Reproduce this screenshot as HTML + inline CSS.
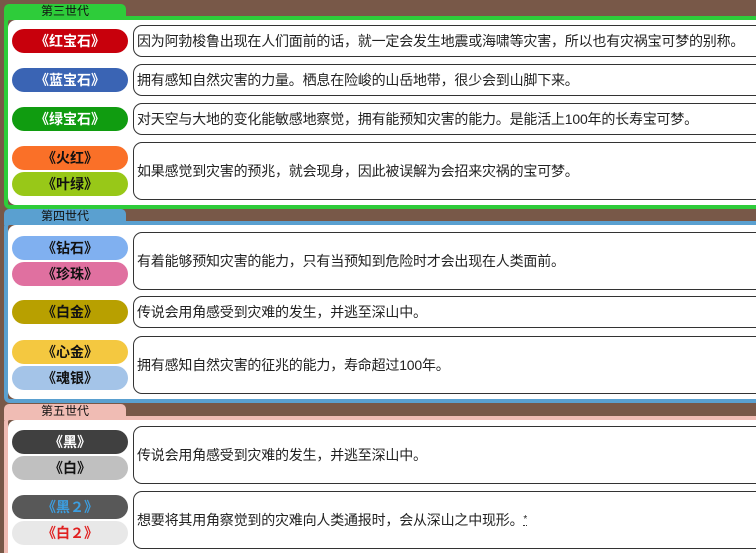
<!DOCTYPE html>
<html style="width:756px;height:553px;overflow:hidden"><head><meta charset="utf-8"><style>
*{margin:0;padding:0;box-sizing:border-box}
body{width:756px;height:553px;background:#785848;position:relative;overflow:hidden;font-family:"Liberation Sans","Noto Sans CJK SC",sans-serif}
.tab{position:absolute;left:4px;width:122px;height:16px;border-radius:5px 5px 0 0;font-size:12px;text-align:center;line-height:15px;color:#111}
.pan{position:absolute;left:4px;width:760px;border:4px solid;border-right:none;border-radius:6px 0 0 6px}
.in{position:absolute;inset:0;background:#fff;border-radius:8px 0 0 8px}
.p{position:absolute;left:12px;width:116px;height:24px;border-radius:12px;text-align:center;line-height:24px;font-size:14px;font-weight:bold}
.b{position:absolute;left:133px;width:640px;border:1px solid #333;border-radius:9px;font-size:14px;color:#222;padding-left:3px;display:flex;align-items:center;letter-spacing:-0.2px;white-space:nowrap}
</style></head><body>
<div class="tab" style="top:4px;background:#2ecc3a">第三世代</div>
<div class="pan" style="top:16px;height:193px;border-color:#2ecc3a"><div class="in"></div></div>
<div class="tab" style="top:209px;background:#5aa0d0">第四世代</div>
<div class="pan" style="top:221px;height:182px;border-color:#5aa0d0"><div class="in"></div></div>
<div class="tab" style="top:404px;background:#f0bcb4">第五世代</div>
<div class="pan" style="top:416px;height:137px;border-bottom:none;border-radius:6px 0 0 0;border-color:#f0bcb4"><div class="in" style="border-radius:8px 0 0 0"></div></div>

<div class="p" style="top:29px;background:#c8000c;color:#fff">《红宝石》</div>
<div class="p" style="top:68px;background:#3a64b4;color:#fff">《蓝宝石》</div>
<div class="p" style="top:107px;background:#109c10;color:#fff">《绿宝石》</div>
<div class="p" style="top:146px;background:#fa7028;color:#111">《火红》</div>
<div class="p" style="top:172px;background:#98c818;color:#111">《叶绿》</div>
<div class="b" style="top:25px;height:32px">因为阿勃梭鲁出现在人们面前的话，就一定会发生地震或海啸等灾害，所以也有灾祸宝可梦的别称。</div>
<div class="b" style="top:64px;height:32px">拥有感知自然灾害的力量。栖息在险峻的山岳地带，很少会到山脚下来。</div>
<div class="b" style="top:103px;height:32px">对天空与大地的变化能敏感地察觉，拥有能预知灾害的能力。是能活上100年的长寿宝可梦。</div>
<div class="b" style="top:142px;height:58px">如果感觉到灾害的预兆，就会现身，因此被误解为会招来灾祸的宝可梦。</div>

<div class="p" style="top:236px;background:#80b0f0;color:#111">《钻石》</div>
<div class="p" style="top:262px;background:#e070a0;color:#111">《珍珠》</div>
<div class="p" style="top:300px;background:#b8a000;color:#111">《白金》</div>
<div class="p" style="top:340px;background:#f4c840;color:#111">《心金》</div>
<div class="p" style="top:366px;background:#a4c4e8;color:#111">《魂银》</div>
<div class="b" style="top:232px;height:58px">有着能够预知灾害的能力，只有当预知到危险时才会出现在人类面前。</div>
<div class="b" style="top:296px;height:32px">传说会用角感受到灾难的发生，并逃至深山中。</div>
<div class="b" style="top:336px;height:58px">拥有感知自然灾害的征兆的能力，寿命超过100年。</div>

<div class="p" style="top:430px;background:#404040;color:#fff">《黑》</div>
<div class="p" style="top:456px;background:#c0c0c0;color:#111">《白》</div>
<div class="p" style="top:495px;background:#585858;color:#3c9ee0">《黑２》</div>
<div class="p" style="top:521px;background:#e8e8e8;color:#e02020">《白２》</div>
<div class="b" style="top:426px;height:58px">传说会用角感受到灾难的发生，并逃至深山中。</div>
<div class="b" style="top:491px;height:58px">想要将其用角察觉到的灾难向人类通报时，会从深山之中现形。<span style="font-size:10px;vertical-align:super;border-bottom:1px dotted #333">*</span></div>
</body></html>
